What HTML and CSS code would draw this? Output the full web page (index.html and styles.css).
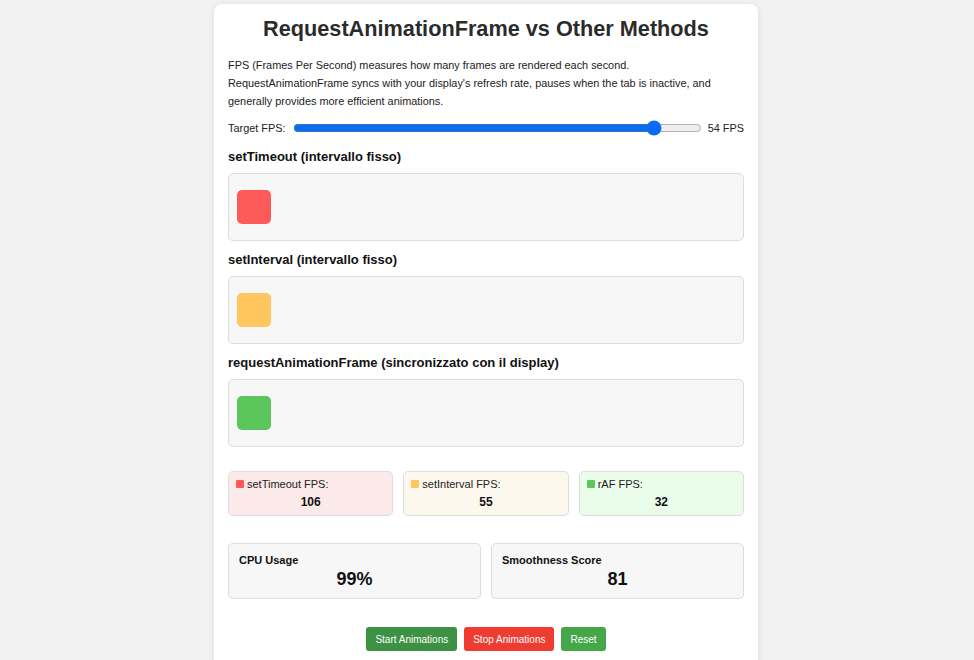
FILE: index.html
```html
<!DOCTYPE html>
<html lang="en">
<head>
    <meta charset="UTF-8">
    <title>RequestAnimationFrame vs Other Methods</title>
    <link rel="stylesheet" href="styles.css">
</head>
<body>
    <div class="container">
        <h1>RequestAnimationFrame vs Other Methods</h1>

        <p class="intro">FPS (Frames Per Second) measures how many frames are rendered each second.<br>
        RequestAnimationFrame syncs with your display's refresh rate, pauses when the tab is inactive, and generally provides more efficient animations.</p>

        <!-- Controllo FPS -->
        <div class="fps-control">
            <label for="fpsSlider">Target FPS:</label>
            <input type="range" id="fpsSlider" min="1" max="60" value="54">
            <span class="fps-value">54 FPS</span>
        </div>

        <!-- Animazioni -->
        <h3 class="track-title">setTimeout (intervallo fisso)</h3>
        <div class="track">
            <div class="box box-timeout"></div>
        </div>

        <h3 class="track-title">setInterval (intervallo fisso)</h3>
        <div class="track">
            <div class="box box-interval"></div>
        </div>

        <h3 class="track-title">requestAnimationFrame (sincronizzato con il display)</h3>
        <div class="track">
            <div class="box box-raf"></div>
        </div>

        <!-- Contatori FPS -->
        <div class="fps-stats">
            <div class="stat stat-timeout">
                <div class="stat-label"><span class="dot dot-timeout"></span>setTimeout FPS:</div>
                <div class="stat-value">106</div>
            </div>
            <div class="stat stat-interval">
                <div class="stat-label"><span class="dot dot-interval"></span>setInterval FPS:</div>
                <div class="stat-value">55</div>
            </div>
            <div class="stat stat-raf">
                <div class="stat-label"><span class="dot dot-raf"></span>rAF FPS:</div>
                <div class="stat-value">32</div>
            </div>
        </div>

        <!-- Metriche -->
        <div class="metrics">
            <div class="metric">
                <div class="metric-label">CPU Usage</div>
                <div class="metric-value">99%</div>
            </div>
            <div class="metric">
                <div class="metric-label">Smoothness Score</div>
                <div class="metric-value">81</div>
            </div>
        </div>

        <!-- Pulsanti -->
        <div class="controls">
            <button class="btn btn-start">Start Animations</button>
            <button class="btn btn-stop">Stop Animations</button>
            <button class="btn btn-reset">Reset</button>
        </div>
    </div>
</body>
</html>
```

FILE: styles.css
```css
body {
    margin: 0;
    padding: 4px 2px 0 0;
    font-family: "Liberation Sans", Arial, sans-serif;
    background-color: #f2f2f2;
    color: #222;
}

.container {
    width: 544px;
    margin: 0 auto;
    padding: 12px 14px 40px;
    box-sizing: border-box;
    background-color: #fff;
    border-radius: 8px;
    box-shadow: 0 1px 6px rgba(0, 0, 0, 0.1);
}

h1 {
    margin: 0 0 14px;
    font-size: 21.7px;
    text-align: center;
    color: #2b2b2b;
}

.intro {
    margin: 0 0 8px;
    font-size: 10.9px;
    line-height: 18px;
    color: #222;
}

.fps-control {
    display: flex;
    align-items: center;
    font-size: 10.9px;
    height: 20px;
}

.fps-control input {
    flex: 1;
    margin: 0 6px 0 7px;
    accent-color: #0a6cf5;
}

.track-title {
    margin: 11px 0 9px;
    font-size: 13px;
    color: #111;
}

.track {
    height: 68px;
    display: flex;
    align-items: center;
    padding: 0 8px;
    background-color: #f7f7f7;
    border: 1px solid #ddd;
    border-radius: 5px;
    box-sizing: border-box;
}

.box {
    width: 34px;
    height: 34px;
    border-radius: 5px;
}

.box-timeout { background-color: #ff5a5a; }
.box-interval { background-color: #ffc55e; }
.box-raf { background-color: #5cc55c; }

.fps-stats {
    display: grid;
    grid-template-columns: repeat(3, 1fr);
    gap: 10px;
    margin-top: 24px;
}

.stat {
    height: 45px;
    padding: 6px 7px;
    box-sizing: border-box;
    border: 1px solid #ddd;
    border-radius: 5px;
    font-size: 11px;
}

.stat-timeout { background-color: #fce9ea; }
.stat-interval { background-color: #fcf8ed; }
.stat-raf { background-color: #eafcea; }

.stat-label {
    display: flex;
    align-items: center;
    color: #222;
}

.dot {
    width: 8px;
    height: 8px;
    margin-right: 3px;
    border-radius: 1px;
}

.dot-timeout { background-color: #ff5a5a; }
.dot-interval { background-color: #ffc55e; }
.dot-raf { background-color: #5cc55c; }

.stat-value {
    margin-top: 5px;
    text-align: center;
    font-size: 12px;
    font-weight: bold;
    color: #111;
}

.metrics {
    display: grid;
    grid-template-columns: 1fr 1fr;
    gap: 10px;
    margin-top: 27px;
}

.metric {
    height: 56px;
    padding: 10px 10px;
    box-sizing: border-box;
    background-color: #f7f7f7;
    border: 1px solid #ddd;
    border-radius: 5px;
}

.metric-label {
    font-size: 11px;
    font-weight: bold;
    color: #111;
}

.metric-value {
    margin-top: 3px;
    text-align: center;
    font-size: 18px;
    font-weight: bold;
    color: #111;
}

.controls {
    display: flex;
    justify-content: center;
    gap: 7px;
    margin-top: 28px;
}

.btn {
    height: 24px;
    padding: 0 9px;
    border: none;
    border-radius: 3px;
    font-family: "Liberation Sans", Arial, sans-serif;
    font-size: 10px;
    color: #fff;
    cursor: pointer;
}

.btn-start { background-color: #3d9142; }
.btn-stop { background-color: #f03c30; }
.btn-reset { background-color: #44a849; }
```
